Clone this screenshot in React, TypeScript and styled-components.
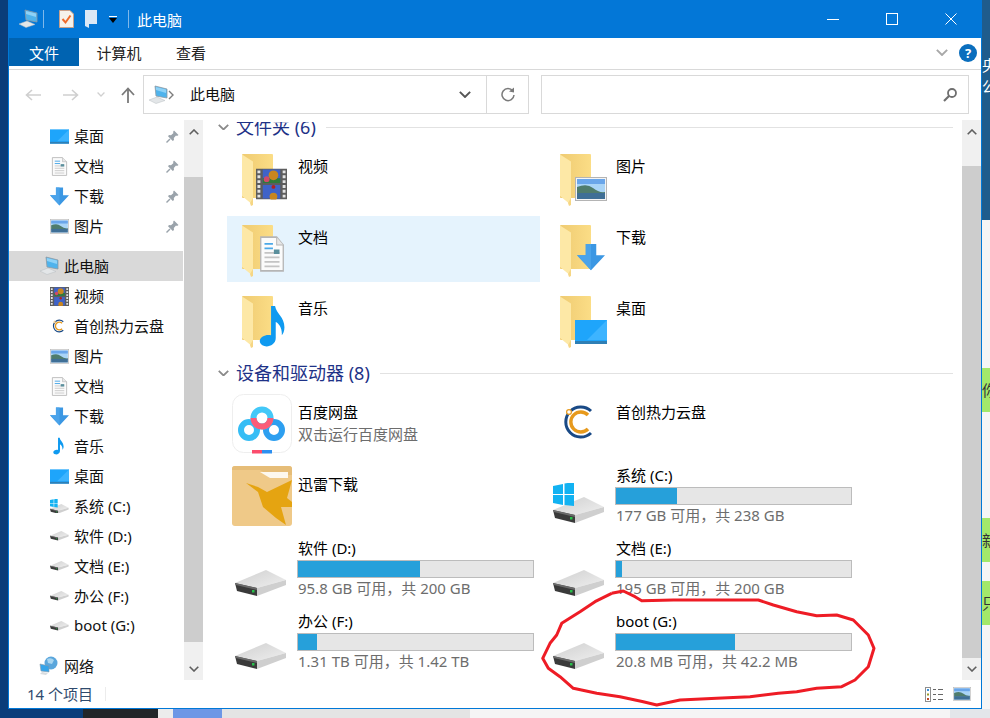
import type { ReactNode } from 'react'
import styled, { createGlobalStyle } from 'styled-components'

const FONT = `'Noto Sans', 'Noto Sans CJK SC', sans-serif`

const GlobalStyle = createGlobalStyle`
  html, body {
    margin: 0;
    padding: 0;
    background: #f5f5f5;
  }
  * {
    box-sizing: border-box;
  }
`

const Small = styled.span`
  display: flex;
  align-items: center;
  justify-content: center;
  width: 19px;
  height: 19px;

  svg {
    width: 100%;
    height: 100%;
  }
`

/* ---------- icons ---------- */

function PcIcon({ size = 20 }: { size?: number }) {
  return (
    <svg width={size} height={size} viewBox="0 0 20 20">
      <polygon points="1,15 9,12 17,15.5 8,18.5" fill="#e3e6e8" stroke="#b9bec2" strokeWidth="0.5" />
      <polygon points="7,1 19,4 19,13 8,11" fill="#4fb3ec" stroke="#8f9aa3" strokeWidth="0.8" />
      <polygon points="8,2 18,4.6 18,8 8,5" fill="#8ed2f7" />
    </svg>
  )
}

function DesktopIcon() {
  return (
    <svg width="32" height="24" viewBox="0 0 32 24">
      <rect width="32" height="24" fill="#1ea5fb" />
      <polygon points="32,0 32,20 12,20" fill="#3db4ff" />
      <rect y="21" width="32" height="3" fill="#2f7fb5" />
    </svg>
  )
}

function DocIcon() {
  return (
    <svg width="32" height="32" viewBox="0 0 32 32">
      <path d="M4 1 H21 L28 8 V31 H4 Z" fill="#fbfbfb" stroke="#b5b5b5" strokeWidth="1.4" />
      <path d="M21 1 V8 H28" fill="#e6e6e6" stroke="#b5b5b5" />
      <path d="M8 7 H17 M8 11 H17" stroke="#4aa8e8" strokeWidth="1.6" />
      <path d="M8 15 H24 M8 19 H24 M8 23 H24 M8 27 H24" stroke="#c4c4c4" strokeWidth="1.4" />
      <rect x="18" y="12" width="6" height="4" fill="#5b8f9c" />
    </svg>
  )
}

function ArrowDownIcon() {
  return (
    <svg width="32" height="32" viewBox="0 0 32 32">
      <polygon points="10,1 22,1 22,14 32,14 16,31 0,14 10,14" fill="#3b97e3" />
      <polygon points="10,1 16,1 16,31 0,14 10,14" fill="#4aa3ea" />
    </svg>
  )
}

function PictureIcon() {
  return (
    <svg width="32" height="24" viewBox="0 0 32 24">
      <rect x="0.5" y="0.5" width="31" height="23" fill="#f4f4f4" stroke="#b4b4b4" />
      <rect x="2" y="2" width="28" height="20" fill="#a9d4f7" />
      <rect x="2" y="2" width="28" height="5" fill="#6aa6ea" />
      <path d="M2 10 Q12 6 18 11 T30 15 V17 H2 Z" fill="#4f7c6c" />
      <rect x="2" y="16" width="28" height="6" fill="#3f6f96" />
    </svg>
  )
}

function FilmIcon() {
  return (
    <svg width="32" height="32" viewBox="0 0 32 32">
      <rect width="32" height="32" fill="#5d5d5d" />
      <path d="M3 2 V30 M29 2 V30" stroke="#e4e4e4" strokeWidth="3" strokeDasharray="3 2" />
      <rect x="7" y="1" width="18" height="14" fill="#3f63c8" />
      <rect x="7" y="17" width="18" height="14" fill="#3f63c8" />
      <rect x="7" y="10" width="18" height="5" fill="#2f7a3a" />
      <circle cx="18" cy="7" r="5" fill="#c9861f" />
      <circle cx="11" cy="11" r="3" fill="#d04a6a" />
      <circle cx="18" cy="29" r="4" fill="#c9861f" />
      <circle cx="18" cy="19" r="2" fill="#b32020" />
    </svg>
  )
}

function NoteIcon({ size = 32 }: { size?: number }) {
  return (
    <svg width={size * 0.62} height={size} viewBox="0 0 20 32">
      <path
        d="M9 1 H12 C13 7 19 9 19 17 C19 20 18 22 17 23 C17.5 18 15 14 12.5 13 V25 C12.5 30 7 32 4 31 C0 30 -0.5 26 2.5 24 C5 22.5 7 22.5 9 23 Z"
        fill="#0f9af0"
      />
    </svg>
  )
}

function FolderIcon({ children }: { children?: ReactNode }) {
  return (
    <svg width="50" height="54" viewBox="0 0 50 54">
      <defs>
        <linearGradient id="folderBack" x1="0" y1="0" x2="1" y2="0">
          <stop offset="0" stopColor="#efcb72" />
          <stop offset="1" stopColor="#fbdd86" />
        </linearGradient>
      </defs>
      <rect width="31" height="44" rx="1" fill="url(#folderBack)" />
      <polygon points="0,0.5 11,7.5 11,51 0,42" fill="#fde8a6" />
      <polygon points="11,7.5 11,51 9,52 8,49 11,44" fill="#f6d684" />
      {children}
    </svg>
  )
}

function DriveIcon({ width = 52, withLogo = false }: { width?: number; withLogo?: boolean }) {
  const logo = withLogo
  return (
    <svg width={width} height={(width / 52) * (logo ? 41 : 27)} viewBox={logo ? '0 -14 52 41' : '0 0 52 27'}>
      <defs>
        <linearGradient id="driveTop" x1="0" y1="0" x2="1" y2="1">
          <stop offset="0" stopColor="#cfcfcf" />
          <stop offset="1" stopColor="#efefef" />
        </linearGradient>
      </defs>
      <polygon points="0,13 31,0 51,10 22,18" fill="url(#driveTop)" />
      <polygon points="22,18 51,10 51,15 22,26" fill="#cfcfcf" />
      <polygon points="0,13 22,18 22,26 2,21" fill="#3a3a3a" />
      <polygon points="0,13 22,18 22,20 1,15" fill="#6a6a6a" />
      <rect x="17" y="20" width="2.5" height="2.5" fill="#27c04a" />
      {logo && (
        <g fill="#12b2f2">
          <polygon points="0,-11 10,-13 10,-3 0,-3" />
          <polygon points="11.5,-13.5 21,-15 21,-3 11.5,-3" />
          <polygon points="0,-2 10,-2 10,8 0,6" />
          <polygon points="11.5,-2 21,-2 21,9 11.5,8" />
        </g>
      )}
    </svg>
  )
}

function CapitalIcon({ size = 36 }: { size?: number }) {
  return (
    <svg width={size} height={size} viewBox="0 0 36 36">
      <path d="M29 7 A15 15 0 1 0 29 29" fill="none" stroke="#1a4a86" strokeWidth="3" />
      <path d="M26 11 A10 10 0 1 0 26 25" fill="none" stroke="#e79a1d" strokeWidth="3.4" />
      <circle cx="7" cy="8" r="2.4" fill="#fff" stroke="#e79a1d" strokeWidth="1.2" />
    </svg>
  )
}

function BaiduIcon() {
  return (
    <svg width="60" height="60" viewBox="0 0 60 60">
      <rect x="0.5" y="0.5" width="59" height="58" rx="11" fill="#fff" stroke="#eeeeee" />
      <circle cx="17" cy="36" r="8" fill="none" stroke="#35bdf5" strokeWidth="6" />
      <circle cx="42" cy="36" r="8" fill="none" stroke="#2d9ff0" strokeWidth="6" />
      <circle cx="30" cy="24" r="8.5" fill="none" stroke="#43c8f8" strokeWidth="6" />
      <path d="M21.5 24 A8.5 8.5 0 0 0 38.5 24" fill="none" stroke="#fb5c78" strokeWidth="6" />
      <rect x="20" y="56" width="10" height="3.5" fill="#fb4c6c" />
      <rect x="30" y="56" width="10" height="3.5" fill="#2d8ff0" />
    </svg>
  )
}

function ThunderIcon() {
  return (
    <svg width="60" height="60" viewBox="0 0 60 60">
      <rect width="60" height="60" rx="3" fill="#efc988" />
      <path d="M0 3 Q0 0 3 0 H57 Q60 0 60 3 V9 H36 L28 4 H0 Z" fill="#e6bd78" />
      <polygon points="28,6 56,6 56,12 38,12" fill="#fdf8ee" />
      <path d="M14 17 L26 21 L35 26 L60 14 L55 32 L60 36 V41 H49 L54 59 L44 52 L31 41 L26 26 Z" fill="#e5a411" />
    </svg>
  )
}

function NetworkIcon() {
  return (
    <svg width="20" height="20" viewBox="0 0 20 20">
      <circle cx="12" cy="7" r="6.5" fill="#5aa6dc" />
      <path d="M8 3 Q12 1 15 4 L13 8 L9 7 Z" fill="#a8d5f0" />
      <polygon points="1,8 10,10 10,16 2,15" fill="#35a4ea" stroke="#889aa8" strokeWidth="0.6" />
      <polygon points="3,16 9,17 7,19 1,18" fill="#d8dcdf" />
    </svg>
  )
}

function PinIcon() {
  return (
    <svg width="13" height="13" viewBox="0 0 13 13">
      <path d="M8 0.5 L12.5 5 L11 6 L10 5.5 L7.8 8 L8 10 L6.8 11 L2 6.2 L3 5 L5 5.2 L7.5 3 L7 2 Z" fill="#9aa3ab" />
      <path d="M4 9 L0.5 12.5" stroke="#9aa3ab" strokeWidth="1.4" />
    </svg>
  )
}

function Chevron({ dir, color = '#5f5f5f', size = 10 }: { dir: 'up' | 'down'; color?: string; size?: number }) {
  return (
    <svg width={size} height={size * 0.6} viewBox="0 0 10 6">
      <path d={dir === 'up' ? 'M0.7 5.3 L5 1 L9.3 5.3' : 'M0.7 0.7 L5 5 L9.3 0.7'} fill="none" stroke={color} strokeWidth="1.6" />
    </svg>
  )
}

function NavArrow({ flip, color }: { flip?: boolean; color: string }) {
  return (
    <svg width="16" height="14" viewBox="0 0 16 14">
      <path
        d={flip ? 'M0 7 H14 M9 2 L14.5 7 L9 12' : 'M16 7 H2 M7 2 L1.5 7 L7 12'}
        fill="none"
        stroke={color}
        strokeWidth="1.6"
      />
    </svg>
  )
}

function RedCircle() {
  const pts = [
    [215, 40], [250, 33], [285, 50], [305, 62], [400, 60], [530, 60], [655, 60], [700, 75], [770, 95],
    [830, 107], [890, 105], [940, 120], [985, 165], [1002, 205], [985, 260], [945, 300], [905, 320],
    [830, 325], [770, 335], [715, 340], [630, 350], [530, 355], [420, 360], [350, 375], [310, 365],
    [240, 350], [170, 340], [100, 325], [60, 290], [25, 265], [8, 235], [30, 190], [50, 165], [65, 130],
    [120, 95], [165, 65], [215, 40],
  ]
  const d = pts.map(([x, y], i) => `${i ? 'L' : 'M'}${(x / 3).toFixed(1)} ${(y / 3).toFixed(1)}`).join(' ')
  return (
    <Scribble width="340" height="130" viewBox="0 0 340 130">
      <path d={d} fill="none" stroke="#ee1c25" strokeWidth="3" strokeLinejoin="round" />
    </Scribble>
  )
}

/* ---------- data ---------- */

const navItems: { label: string; icon: ReactNode; pin?: boolean; gapBefore?: boolean; level?: number; selected?: boolean }[] = [
  { label: '桌面', icon: <Small><DesktopIcon /></Small>, pin: true },
  { label: '文档', icon: <Small><DocIcon /></Small>, pin: true },
  { label: '下载', icon: <Small><ArrowDownIcon /></Small>, pin: true },
  { label: '图片', icon: <Small><PictureIcon /></Small>, pin: true },
  { label: '此电脑', icon: <PcIcon />, level: 0, gapBefore: true, selected: true },
  { label: '视频', icon: <Small><FilmIcon /></Small> },
  { label: '首创热力云盘', icon: <CapitalIcon size={14} /> },
  { label: '图片', icon: <Small><PictureIcon /></Small> },
  { label: '文档', icon: <Small><DocIcon /></Small> },
  { label: '下载', icon: <Small><ArrowDownIcon /></Small> },
  { label: '音乐', icon: <NoteIcon size={18} /> },
  { label: '桌面', icon: <Small><DesktopIcon /></Small> },
  { label: '系统 (C:)', icon: <DriveIcon width={19} withLogo /> },
  { label: '软件 (D:)', icon: <DriveIcon width={19} /> },
  { label: '文档 (E:)', icon: <DriveIcon width={19} /> },
  { label: '办公 (F:)', icon: <DriveIcon width={19} /> },
  { label: 'boot (G:)', icon: <DriveIcon width={19} /> },
  { label: '网络', icon: <NetworkIcon />, level: 0, gapBefore: true },
]

const folders: { label: string; selected?: boolean; overlay: ReactNode }[] = [
  { label: '视频', overlay: <svg x="14" y="14" width="31" height="32" viewBox="0 0 32 32"><FilmIcon /></svg> },
  { label: '图片', overlay: <svg x="15" y="23" width="32" height="24" viewBox="0 0 32 24"><PictureIcon /></svg> },
  { label: '文档', selected: true, overlay: <svg x="15" y="11" width="30" height="36" viewBox="0 0 32 32" preserveAspectRatio="none"><DocIcon /></svg> },
  { label: '下载', overlay: <svg x="17" y="18" width="28" height="28" viewBox="0 0 32 32"><ArrowDownIcon /></svg> },
  { label: '音乐', overlay: <svg x="17" y="8" width="27" height="44" viewBox="0 0 20 32"><NoteIcon /></svg> },
  { label: '桌面', overlay: <svg x="15" y="24" width="32" height="24" viewBox="0 0 32 24"><DesktopIcon /></svg> },
]

const drives: { label: string; free: string; pct: number; withLogo?: boolean }[] = [
  { label: '系统 (C:)', free: '177 GB 可用，共 238 GB', pct: 26, withLogo: true },
  { label: '软件 (D:)', free: '95.8 GB 可用，共 200 GB', pct: 52 },
  { label: '文档 (E:)', free: '195 GB 可用，共 200 GB', pct: 2.5 },
  { label: '办公 (F:)', free: '1.31 TB 可用，共 1.42 TB', pct: 8 },
  { label: 'boot (G:)', free: '20.8 MB 可用，共 42.2 MB', pct: 50.5 },
]

/* ---------- page ---------- */

function App() {
  const [sys, soft, docs, office, boot] = drives
  return (
    <>
      <GlobalStyle />
      <Desktop>
        <TopArea>
          <LeftEdge />
          <Window>
            <TitleBar>
              <QuickIcons>
                <PcIcon />
                <TitleSep />
                <svg width="15" height="18" viewBox="0 0 15 18">
                  <path d="M0.5 0.5 H11 L14.5 4 V17.5 H0.5 Z" fill="#f6f1ea" stroke="#c9a08a" />
                  <path d="M3.5 9 L6.5 12.5 L11.5 5.5" fill="none" stroke="#ef6a2a" strokeWidth="2" />
                </svg>
                <svg width="13" height="18" viewBox="0 0 13 18">
                  <polygon points="0,0 12,0 12,14 4,14 4,18 0,16" fill="#dbe8f6" />
                </svg>
                <svg width="8" height="7" viewBox="0 0 8 7">
                  <rect width="8" height="1" fill="#fff" />
                  <polygon points="0,2 8,2 4,7" fill="#000" />
                </svg>
                <TitleSep />
              </QuickIcons>
              <TitleText>此电脑</TitleText>
              <WinButtons>
                <WinButton>
                  <svg width="12" height="12" viewBox="0 0 12 12"><path d="M0 6.5 H12" stroke="#fff" /></svg>
                </WinButton>
                <WinButton>
                  <svg width="12" height="12" viewBox="0 0 12 12"><rect x="0.5" y="0.5" width="11" height="11" fill="none" stroke="#fff" /></svg>
                </WinButton>
                <WinButton>
                  <svg width="12" height="12" viewBox="0 0 12 12"><path d="M0.5 0.5 L11.5 11.5 M11.5 0.5 L0.5 11.5" stroke="#fff" /></svg>
                </WinButton>
              </WinButtons>
            </TitleBar>

            <Ribbon>
              <FileTab>文件</FileTab>
              <RibbonTab $width={80}>计算机</RibbonTab>
              <RibbonTab $width={64}>查看</RibbonTab>
              <RibbonRight>
                <Chevron dir="down" color="#a8a8a8" size={12} />
                <HelpBadge>?</HelpBadge>
              </RibbonRight>
            </Ribbon>

            <NavBar>
              <NavButtons>
                <NavArrow color="#cfcfcf" />
                <NavArrow flip color="#cfcfcf" />
                <Chevron dir="down" color="#d0d0d0" size={8} />
                <svg width="14" height="16" viewBox="0 0 14 16">
                  <path d="M7 16 V2 M1 8 L7 1.5 L13 8" fill="none" stroke="#7a7a7a" strokeWidth="1.8" />
                </svg>
              </NavButtons>
              <AddressBox>
                <PcIcon />
                <svg width="6" height="10" viewBox="0 0 6 10">
                  <path d="M1 1 L5 5 L1 9" fill="none" stroke="#7d7d7d" strokeWidth="1.4" />
                </svg>
                <AddressText>此电脑</AddressText>
                <Chevron dir="down" color="#555" size={12} />
                <RefreshCell>
                  <svg width="16" height="16" viewBox="0 0 16 16">
                    <path d="M12.8 4 A6 6 0 1 0 14 8" fill="none" stroke="#7a7a7a" strokeWidth="1.5" />
                    <polygon points="9,4.5 14,5.5 14,0.5" fill="#7a7a7a" />
                  </svg>
                </RefreshCell>
              </AddressBox>
              <SearchBox>
                <svg width="14" height="14" viewBox="0 0 14 14">
                  <circle cx="9" cy="5" r="4" fill="none" stroke="#6f6f6f" strokeWidth="1.8" />
                  <path d="M6 8 L1 13" stroke="#6f6f6f" strokeWidth="2.2" />
                </svg>
              </SearchBox>
            </NavBar>

            <Main>
              <NavPane>
                {navItems.map((item, i) => (
                  <NavRow key={i} $gap={item.gapBefore} $selected={item.selected} $level={item.level ?? 1}>
                    <NavIcon>{item.icon}</NavIcon>
                    <NavLabel>{item.label}</NavLabel>
                    {item.pin && <PinSlot><PinIcon /></PinSlot>}
                  </NavRow>
                ))}
              </NavPane>
              <ScrollBar $top={33} $bottom={16} />

              <Content>
                <GroupHeader $first>
                  <Chevron dir="down" color="#8a8a8a" size={11} />
                  <GroupTitle>文件夹 (6)</GroupTitle>
                  <GroupLine />
                </GroupHeader>
                <FolderGrid>
                  {folders.map((f) => (
                    <FolderTile key={f.label} $selected={f.selected}>
                      <FolderIcon>{f.overlay}</FolderIcon>
                      <TileName>{f.label}</TileName>
                    </FolderTile>
                  ))}
                </FolderGrid>

                <GroupHeader>
                  <Chevron dir="down" color="#8a8a8a" size={11} />
                  <GroupTitle>设备和驱动器 (8)</GroupTitle>
                  <GroupLine />
                </GroupHeader>
                <DeviceGrid>
                  <DeviceTile>
                    <IconSlot $left={5} $top={4}><BaiduIcon /></IconSlot>
                    <DeviceText $top={11}>
                      <DeviceName>百度网盘</DeviceName>
                      <DeviceSub>双击运行百度网盘</DeviceSub>
                    </DeviceText>
                  </DeviceTile>
                  <DeviceTile>
                    <IconSlot $left={17} $top={14}><CapitalIcon /></IconSlot>
                    <DeviceText $top={11}>
                      <DeviceName>首创热力云盘</DeviceName>
                    </DeviceText>
                  </DeviceTile>
                  <DeviceTile>
                    <IconSlot $left={5} $top={3}><ThunderIcon /></IconSlot>
                    <DeviceText $top={10}>
                      <DeviceName>迅雷下载</DeviceName>
                    </DeviceText>
                  </DeviceTile>
                  <DriveTile drive={sys} top={20} />
                  <DriveTile drive={soft} top={34} />
                  <DriveTile drive={docs} top={34} />
                  <DriveTile drive={office} top={34} />
                  <DriveTile drive={boot} top={34} />
                </DeviceGrid>
              </Content>
              <ScrollBar $top={22} $bottom={0} />
            </Main>

            <StatusBar>
              <StatusText>14 个项目</StatusText>
              <StatusSep />
              <ViewIcons>
                <svg width="18" height="15" viewBox="0 0 18 15">
                  <rect x="0.5" y="0.5" width="5" height="14" fill="#fff" stroke="#8f8f8f" />
                  <rect x="2" y="2" width="2" height="2" fill="#3a8fd8" />
                  <rect x="2" y="6.5" width="2" height="2" fill="#9a9a2a" />
                  <rect x="2" y="11" width="2" height="2" fill="#c04a2a" />
                  <path d="M8 2.5 H11 M13 2.5 H18 M8 7.5 H11 M13 7.5 H18 M8 12.5 H11 M13 12.5 H18" stroke="#666" />
                </svg>
                <ThumbFrame><PictureIcon /></ThumbFrame>
              </ViewIcons>
            </StatusBar>
            <RedCircle />
          </Window>
          <RightEdge>
            <RightBlue>
              <RightTopGlyph>央</RightTopGlyph>
              <RightGlyph>公</RightGlyph>
            </RightBlue>
            <GreenBand $top={148}>你</GreenBand>
            <GreenBand $top={106}>新</GreenBand>
            <GreenBand $top={19}>只</GreenBand>
          </RightEdge>
        </TopArea>
        <BottomStrip>
          <BottomPiece $width={83} $color="#0a3d7a" />
          <BottomPiece $width={75} $color="#222629" />
          <BottomPiece $width={15} $color="#ececec" />
          <BottomPiece $width={49} $color="#6d97e6" />
          <BottomPiece $width={248} $color="#e4e4e4" />
          <BottomPiece $width={480} $color="#f5f5f5" />
          <BottomPiece $width={40} $color="#e3e6ea" />
        </BottomStrip>
      </Desktop>
    </>
  )
}

function DriveTile({ drive, top }: { drive: (typeof drives)[number]; top: number }) {
  return (
    <DeviceTile>
      <IconSlot $left={8} $top={top}>
        <DriveIcon withLogo={drive.withLogo} />
      </IconSlot>
      <DeviceText $top={1}>
        <DeviceName>{drive.label}</DeviceName>
        <Meter>
          <MeterFill $pct={drive.pct} />
        </Meter>
        <DeviceSub>{drive.free}</DeviceSub>
      </DeviceText>
    </DeviceTile>
  )
}

function ScrollBar({ $top, $bottom }: { $top: number; $bottom: number }) {
  return (
    <Track>
      <ArrowSlot $height={24}>
        <Chevron dir="up" />
      </ArrowSlot>
      <Thumb $top={$top} $bottom={$bottom} />
      <ArrowSlot $height={22}>
        <Chevron dir="down" />
      </ArrowSlot>
    </Track>
  )
}

const Desktop = styled.div`
  display: flex;
  flex-direction: column;
  width: 990px;
  height: 718px;
  overflow: hidden;
  font-family: ${FONT};
  font-size: 15px;
  color: #000;
`

const TopArea = styled.div`
  display: flex;
  height: 709px;
`

const LeftEdge = styled.div`
  width: 8px;
  background: #0a3d7a;
`

const Window = styled.div`
  position: relative;
  display: flex;
  flex-direction: column;
  width: 974px;
  border: 1px solid #0078d7;
  border-top: 0;
  background: #fff;
`

const TitleBar = styled.div`
  display: flex;
  align-items: center;
  height: 38px;
  margin: 0 -1px;
  padding-left: 10px;
  background: #0377d7;
`

const QuickIcons = styled.div`
  display: flex;
  align-items: center;
  gap: 11px;
`

const TitleSep = styled.span`
  width: 1px;
  height: 18px;
  background: #7fb8ea;

  &:nth-child(2) {
    margin: 0 4px 0 -6px;
  }
`

const TitleText = styled.span`
  margin-left: 8px;
  color: #fff;
`

const WinButtons = styled.div`
  display: flex;
  margin-left: auto;
  padding-right: 2px;
`

const WinButton = styled.span`
  display: flex;
  align-items: center;
  justify-content: center;
  width: 59px;
  height: 38px;
`

const Ribbon = styled.div`
  display: flex;
  height: 32px;
  padding-bottom: 4px;
  border-bottom: 1px solid #d9d9d9;
`

const FileTab = styled.div`
  display: flex;
  align-items: center;
  justify-content: center;
  width: 70px;
  height: 28px;
  background: #0063b1;
  color: #fff;
`

const RibbonTab = styled.div<{ $width: number }>`
  display: flex;
  align-items: center;
  justify-content: center;
  width: ${(p) => p.$width}px;
  height: 28px;
  color: #222;
`

const RibbonRight = styled.div`
  display: flex;
  align-items: center;
  gap: 11px;
  margin-left: auto;
  padding-right: 4px;
  padding-top: 2px;
`

const HelpBadge = styled.span`
  display: flex;
  align-items: center;
  justify-content: center;
  width: 18px;
  height: 18px;
  border-radius: 50%;
  background: #0a6ebd;
  color: #fff;
  font-size: 13px;
  font-weight: 700;
`

const NavBar = styled.div`
  display: flex;
  align-items: flex-start;
  height: 50px;
  padding-top: 5px;
`

const NavButtons = styled.div`
  display: flex;
  align-items: center;
  gap: 22px;
  width: 134px;
  height: 39px;
  padding-left: 16px;

  svg:nth-child(3) {
    margin-left: -4px;
  }
  svg:nth-child(4) {
    margin-left: -6px;
  }
`

const AddressBox = styled.div`
  display: flex;
  align-items: center;
  width: 386px;
  height: 39px;
  padding-left: 4px;
  border: 1px solid #d9d9d9;
`

const AddressText = styled.span`
  flex: 1;
  margin: 0 0 2px 16px;
  color: #111;
`

const RefreshCell = styled.span`
  display: flex;
  align-items: center;
  justify-content: center;
  width: 42px;
  height: 100%;
  margin-left: 15px;
  border-left: 1px solid #d9d9d9;
`

const SearchBox = styled.div`
  display: flex;
  align-items: center;
  justify-content: flex-end;
  width: 428px;
  height: 39px;
  margin-left: 12px;
  padding-right: 11px;
  border: 1px solid #d9d9d9;
`

const Main = styled.div`
  display: flex;
  height: 560px;
  overflow: hidden;
`

const NavPane = styled.div`
  width: 175px;
  padding-top: 1px;
`

const NavRow = styled.div<{ $gap?: boolean; $selected?: boolean; $level: number }>`
  display: flex;
  align-items: center;
  height: 30px;
  width: 174px;
  margin-top: ${(p) => (p.$gap ? 10 : 0)}px;
  padding-left: ${(p) => (p.$level === 0 ? 30 : 40)}px;
  background: ${(p) => (p.$selected ? '#d9d9d9' : 'transparent')};
`

const NavIcon = styled.span`
  display: flex;
  align-items: center;
  justify-content: center;
  width: 20px;
  height: 20px;
  margin-right: 5px;
`

const NavLabel = styled.span`
  margin-bottom: 2px;
  white-space: nowrap;
  color: #111;
`

const PinSlot = styled.span`
  display: flex;
  margin-left: auto;
  padding-right: 4px;
`

const Track = styled.div`
  display: flex;
  flex-direction: column;
  flex: none;
  width: 19px;
  background: #f0f0f0;
`

const ArrowSlot = styled.div<{ $height: number }>`
  display: flex;
  flex: none;
  align-items: center;
  justify-content: center;
  height: ${(p) => p.$height}px;
`

const Thumb = styled.div<{ $top: number; $bottom: number }>`
  flex: 1;
  margin-top: ${(p) => p.$top}px;
  margin-bottom: ${(p) => p.$bottom}px;
  background: #cdcdcd;
`

const Content = styled.div`
  flex: none;
  width: 758px;
  margin: 2px 0 0 1px;
  overflow: hidden;
`

const GroupHeader = styled.div<{ $first?: boolean }>`
  display: flex;
  align-items: center;
  height: 24px;
  margin-top: ${(p) => (p.$first ? -7 : 8)}px;
  padding: 0 9px 0 14px;
`

const GroupTitle = styled.span`
  margin: 0 0 2px 7px;
  font-size: 18px;
  color: #1e3287;
  white-space: nowrap;
`

const GroupLine = styled.span`
  flex: 1;
  height: 1px;
  margin-left: 10px;
  background: #e2e2e2;
`

const FolderGrid = styled.div`
  display: grid;
  grid-template-columns: 313px 313px;
  grid-auto-rows: 66px;
  gap: 5px;
  margin-top: 6px;
  padding-left: 23px;
`

const FolderTile = styled.div<{ $selected?: boolean }>`
  display: flex;
  align-items: flex-start;
  padding: 9px 0 0 15px;
  background: ${(p) => (p.$selected ? '#e5f3fd' : 'transparent')};
`

const TileName = styled.span`
  margin: 1px 0 0 6px;
  line-height: 22px;
`

const DeviceGrid = styled.div`
  display: grid;
  grid-template-columns: 313px 313px;
  grid-auto-rows: 68px;
  gap: 5px;
  margin-top: 5px;
  padding-left: 23px;
`

const DeviceTile = styled.div`
  display: grid;
  grid-template-columns: 71px 238px;
`

const IconSlot = styled.div<{ $left: number; $top: number }>`
  padding: ${(p) => p.$top}px 0 0 ${(p) => p.$left}px;

  svg {
    display: block;
  }
`

const DeviceText = styled.div<{ $top: number }>`
  padding-top: ${(p) => p.$top}px;
`

const DeviceName = styled.div`
  line-height: 22px;
  height: 23px;
  white-space: nowrap;
`

const DeviceSub = styled.div`
  line-height: 20px;
  color: #6d6d6d;
  white-space: nowrap;
`

const Meter = styled.div`
  width: 237px;
  height: 18px;
  margin-left: -1px;
  border: 1px solid #bcbcbc;
  background: #e6e6e6;
`

const MeterFill = styled.div<{ $pct: number }>`
  width: ${(p) => p.$pct}%;
  height: 100%;
  background: #26a0da;
`

const Scribble = styled.svg`
  position: absolute;
  left: 531px;
  top: 580px;
  pointer-events: none;
`

const StatusBar = styled.div`
  display: flex;
  align-items: center;
  height: 28px;
  padding-left: 18px;
`

const StatusText = styled.span`
  width: 78px;
  margin-bottom: 2px;
  color: #2f4a6d;
  white-space: nowrap;
`

const StatusSep = styled.span`
  width: 1px;
  height: 14px;
  background: #ececec;
`

const ViewIcons = styled.div`
  display: flex;
  align-items: center;
  gap: 10px;
  margin-left: auto;
  padding-right: 10px;
`

const ThumbFrame = styled.span`
  display: flex;
  width: 18px;
  height: 14px;

  svg {
    width: 100%;
    height: 100%;
  }
`

const RightEdge = styled.div`
  flex: 1;
  overflow: hidden;
  background: #f5f5f5;
`

const RightBlue = styled.div`
  height: 220px;
  padding-top: 2px;
  background: #1f5c8c;
  color: #fff;
  font-size: 15px;
`

const RightTopGlyph = styled.div`
  margin-top: 54px;
  line-height: 18px;
  white-space: nowrap;
`

const RightGlyph = styled.div`
  line-height: 24px;
  white-space: nowrap;
`

const GreenBand = styled.div<{ $top: number }>`
  height: 44px;
  margin-top: ${(p) => p.$top}px;
  background: #a3e86a;
  color: #333;
  font-size: 15px;
  line-height: 44px;
  white-space: nowrap;
`

const BottomStrip = styled.div`
  display: flex;
  flex: 1;
`

const BottomPiece = styled.div<{ $width: number; $color: string }>`
  width: ${(p) => p.$width}px;
  background: ${(p) => p.$color};
`

export default App
